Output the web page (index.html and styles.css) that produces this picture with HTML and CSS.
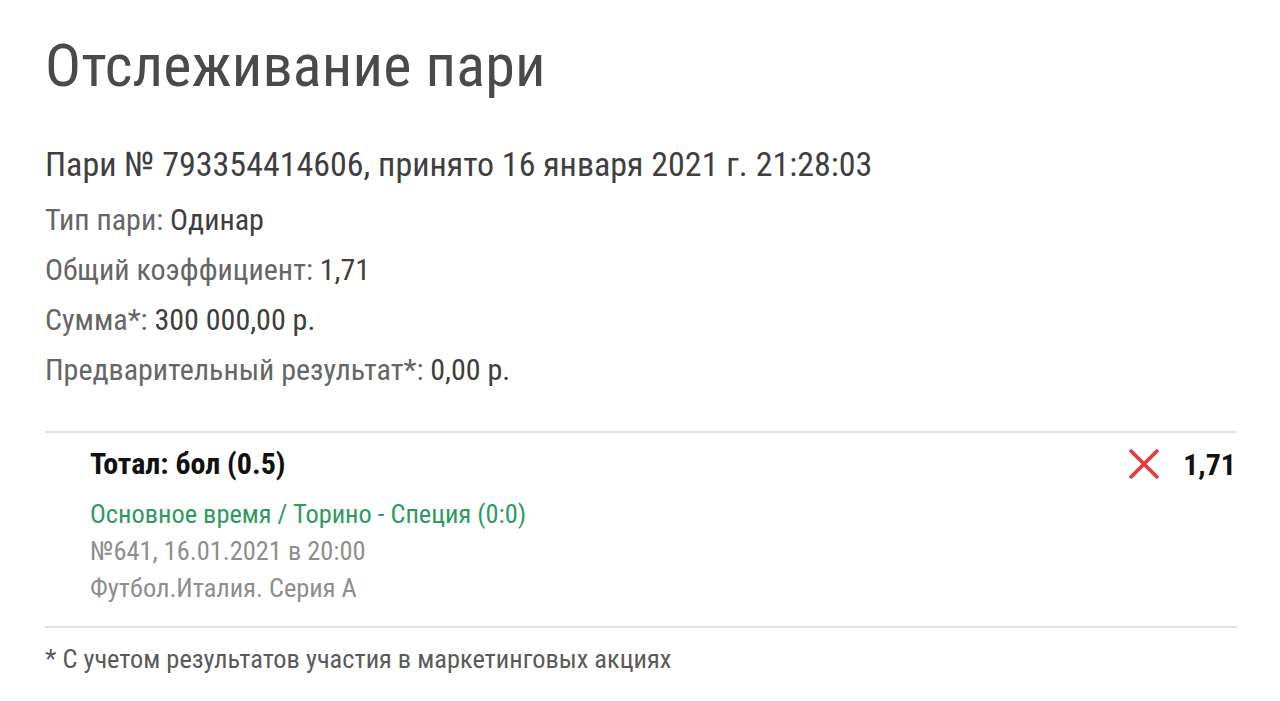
FILE: index.html
```html
<!DOCTYPE html>
<html lang="ru">
<head>
<meta charset="utf-8">
<link rel="stylesheet" href="styles.css">
</head>
<body>
<div class="page">
  <h1 class="title">Отслеживание пари</h1>
  <div class="bet-head">Пари № 793354414606, принято 16 января 2021 г. 21:28:03</div>
  <div class="info">
    <div class="info-row">Тип пари: <span class="val">Одинар</span></div>
    <div class="info-row">Общий коэффициент: <span class="val">1,71</span></div>
    <div class="info-row">Сумма*: <span class="val">300 000,00 р.</span></div>
    <div class="info-row">Предварительный результат*: <span class="val">0,00 р.</span></div>
  </div>
  <div class="event">
    <div class="event-main">
      <div class="event-name">Тотал: бол (0.5)</div>
      <div class="event-match">Основное время / Торино - Специя (0:0)</div>
      <div class="event-meta">№641, 16.01.2021 в 20:00</div>
      <div class="event-meta">Футбол.Италия. Серия А</div>
    </div>
    <div class="event-side">
      <svg class="lose" viewBox="0 0 32 32" width="32" height="32"><path d="M2 2 L30 30 M30 2 L2 30" stroke="#ea3a3f" stroke-width="3.8" fill="none"/></svg>
      <span class="coef">1,71</span>
    </div>
  </div>
  <div class="note">* С учетом результатов участия в маркетинговых акциях</div>
</div>
</body>
</html>
```
FILE: styles.css
```css
html, body { margin: 0; padding: 0; background: #fff; }
body { font-family: Roboto, "Noto Sans", sans-serif; font-stretch: 80%; color: #4b4b4b; }
.page { padding: 21px 43px 0 45px; }
.title { margin: 0; font-size: 60px; font-weight: 400; line-height: 90px; color: #4a4a4a; letter-spacing: 0.2px; }
.bet-head { margin-top: 33px; font-size: 34px; line-height: 40px; color: #3f3f3f; }
.info { margin-top: 11px; }
.info-row { font-size: 30px; line-height: 50px; color: #666; }
.info-row .val { color: #3e3e3e; }
.event { margin-top: 36px; border-top: 2px solid #e2e2e2; border-bottom: 2px solid #e2e2e2; display: flex; justify-content: space-between; padding: 12px 0 19px 45px; }
.event-name { font-size: 30px; font-weight: 700; line-height: 38px; color: #111; margin-bottom: 13px; }
.event-match { font-size: 26.4px; line-height: 37px; color: #2e9a5f; }
.event-meta { font-size: 26.4px; line-height: 37px; color: #8e8e8e; }
.event-side { display: flex; align-items: center; gap: 23px; height: 38px; padding-right: 1px; }
.coef { font-size: 30px; font-weight: 700; color: #111; }
.note { margin-top: 16px; font-size: 26.4px; line-height: 30px; color: #5a5a5a; }
```
